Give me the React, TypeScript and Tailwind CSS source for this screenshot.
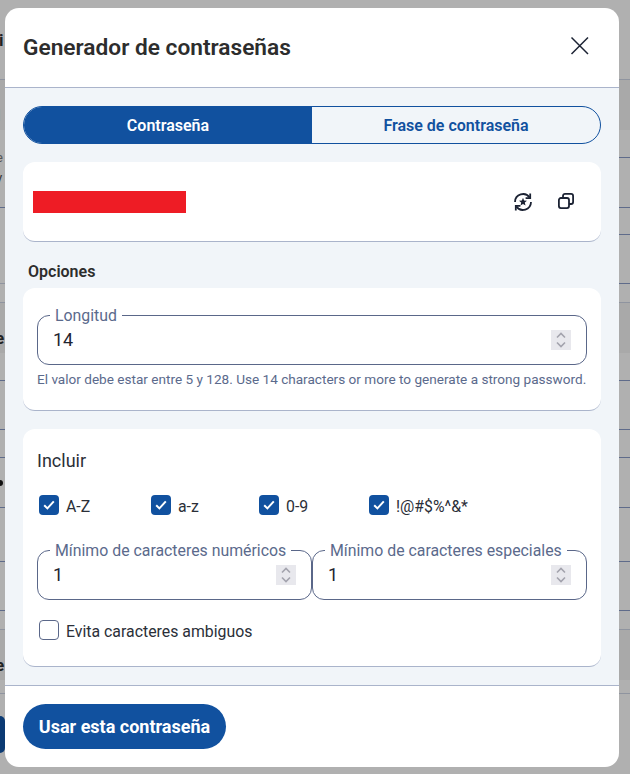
import React from "react";

const LINE = "border-b border-[#5f6b8a]";

// what is visible of the page behind the dialog, cut off at both sides
const BackdropLeft = () => (
  <div className="absolute left-0 top-0 h-full w-[5px] overflow-hidden font-['Roboto',sans-serif] font-bold text-[#222]">
    <div className="h-[80px] border-b border-[#8f949f] pt-[30px] text-[17px] leading-5">
      <span className="-ml-[1px] block">i</span>
    </div>
    <div className="h-[50px] bg-[#a9a9a9] pt-[25px] text-[17px] leading-5">
      <span className="-ml-[4px] block">l</span>
    </div>
    <div className={`h-[78px] pt-[18px] text-[13px] font-normal leading-5 text-[#555] ${LINE}`}>
      <span className="-ml-[4px] block">e</span>
      <span className="-ml-[4px] block text-[#333]">y</span>
    </div>
    <div className="h-[76px] border-b border-[#8f949f]" />
    <div className="h-[19px] border-b border-[#8f949f]" />
    <div className="h-[50px] bg-[#a9a9a9] pt-[25px] text-[17px] leading-5">
      <span className="-ml-[5px] block">e</span>
    </div>
    <div className={`h-[28px] ${LINE}`} />
    <div className={`h-[49px] ${LINE}`} />
    <div className={`h-[28px] ${LINE}`} />
    <div className={`h-[50px] pt-[22px] ${LINE}`}>
      <div className="h-[6px] w-[3px] rounded-r-full bg-[#111]" />
    </div>
    <div className={`h-[54px] ${LINE}`} />
    <div className={`h-[49px] ${LINE}`} />
    <div className="h-[19px] border-b border-[#8f949f]" />
    <div className="h-[50px] bg-[#a9a9a9] pt-[25px] text-[17px] leading-5">
      <span className="-ml-[5px] block">e</span>
    </div>
    <div className="h-[14px] border-b border-[#8f949f]" />
    <div className="mt-[22px] h-[37px] rounded-r-[8px] bg-[#0b3a73]" />
  </div>
);

const BackdropRight = () => (
  <div className="absolute right-0 top-0 h-full w-[11px] overflow-hidden">
    <div className="h-[80px] border-b border-[#8f949f]" />
    <div className="h-[50px] bg-[#a9a9a9]" />
    <div className={`h-[28px] ${LINE}`} />
    <div className={`h-[50px] ${LINE}`} />
    <div className={`h-[27px] ${LINE}`} />
    <div className={`h-[49px] ${LINE}`} />
    <div className="h-[19px] border-b border-[#8f949f]" />
    <div className="h-[50px] bg-[#a9a9a9]" />
    <div className={`h-[28px] ${LINE}`} />
    <div className={`h-[49px] ${LINE}`} />
    <div className={`h-[28px] ${LINE}`} />
    <div className={`h-[50px] ${LINE}`} />
    <div className={`h-[54px] ${LINE}`} />
    <div className={`h-[49px] ${LINE}`} />
    <div className="h-[19px] border-b border-[#8f949f]" />
    <div className="h-[50px] bg-[#a9a9a9]" />
    <div className="h-[14px] border-b border-[#8f949f]" />
  </div>
);

const Spinner = () => (
  <div className="flex h-5 w-5 flex-col items-center justify-center bg-[#e8e8ed]">
    <svg width="12" height="18" viewBox="0 0 12 18" fill="none" stroke="#a3a3ad" strokeWidth="1.6">
      <path d="M2 6.5 6 2.5 10 6.5" />
      <path d="M2 11.5 6 15.5 10 11.5" />
    </svg>
  </div>
);

const NumberField = ({ label, value }: { label: string; value: string }) => (
  <fieldset className="h-[60px] rounded-[12px] border border-[#5a6789] px-[12px]">
    <legend className="h-5 px-[5px] text-[15.85px] leading-[22px] text-[#5b6a8c]">{label}</legend>
    <div className="flex h-[30px] items-center justify-between px-[3px] text-[18px] text-[#1f2430]">
      <span className="leading-[26px]">{value}</span>
      <Spinner />
    </div>
  </fieldset>
);

const Check = ({ label, checked = true, className = "" }: { label: string; checked?: boolean; className?: string }) => (
  <label className={`flex h-6 items-start gap-[7px] text-[15.85px] leading-[27px] text-[#2b2f38] ${className}`}>
    {checked ? (
      <span className="mt-[2px] flex h-5 w-5 items-center justify-center rounded-[4px] bg-[#11519f]">
        <svg width="12" height="10" viewBox="0 0 12 10" fill="none" stroke="#fff" strokeWidth="2">
          <path d="M1.2 5.2 4.4 8.4 10.8 1.4" />
        </svg>
      </span>
    ) : (
      <span className="mt-[2px] h-5 w-5 rounded-[4px] border border-[#5a6789] bg-white" />
    )}
    {label}
  </label>
);

const App = () => (
  <div className="relative h-[774px] w-[630px] overflow-hidden bg-[#b0b0b0] pb-[7px] pl-[5px] pr-[11px] pt-[8px] font-['Roboto',sans-serif]">
    <BackdropLeft />
    <BackdropRight />
    <div className="relative flex h-full flex-col overflow-hidden rounded-[14px] bg-white">
      <header className="flex h-[80px] items-center justify-between border-b border-[#aab4cb] pl-[18px] pr-[29px]">
        <h1 className="pt-[2px] text-[22.7px] font-semibold text-[#2d2d2d]">Generador de contraseñas</h1>
        <svg className="mb-[3px]" width="20" height="20" viewBox="0 0 20 20" fill="none" stroke="#1b2233" strokeWidth="1.5">
          <path d="M1.5 1.5 18 18M18 1.5 1.5 18" />
        </svg>
      </header>

      <main className="flex flex-1 flex-col bg-[#f1f5f9] px-[18px] pt-[18px]">
        <div className="flex h-[38px] overflow-hidden rounded-full border border-[#11519f] text-[16px] font-semibold">
          <div className="flex w-[288px] items-center justify-center bg-[#11519f] pt-[2px] text-white">Contraseña</div>
          <div className="flex flex-1 items-center justify-center pt-[2px] text-[#11519f]">Frase de contraseña</div>
        </div>

        <section className="mt-[18px] flex h-[80px] items-center justify-between rounded-[12px] border-b border-[#aab4cb] bg-white pl-[10px] pr-[27px]">
          <div className="h-[22px] w-[153px] bg-[#ee1c25]" />
          <div className="flex items-center gap-[25px]">
            <svg width="20" height="20" viewBox="0 0 20 20" fill="none" stroke="#1b2233" strokeWidth="1.8">
              <path d="M2 10A8 8 0 0 1 16.6 5.6" />
              <path d="M18 10A8 8 0 0 1 3.4 14.4" />
              <path d="M17.2 1.6V6.2H12.6" />
              <path d="M2.8 18.4V13.8H7.4" />
              <path d="M10 5.8 11.1 8.5 14 8.7 11.8 10.6 12.5 13.4 10 11.9 7.5 13.4 8.2 10.6 6 8.7 8.9 8.5z" fill="#1b2233" stroke="none" />
            </svg>
            <svg className="mb-[1px]" width="16" height="16" viewBox="0 0 16 16" fill="none" stroke="#1b2233" strokeWidth="1.8">
              <rect x="0.9" y="5" width="10.1" height="10.1" rx="2" />
              <path d="M5 5V2.9a2 2 0 0 1 2-2h6.1a2 2 0 0 1 2 2V9a2 2 0 0 1-2 2H11" />
            </svg>
          </div>
        </section>

        <h2 className="mb-[7px] ml-[5px] mt-[21px] text-[16px] font-semibold leading-[18px] text-[#2d2d2d]">Opciones</h2>

        <section className="h-[123px] rounded-[12px] border-b border-[#aab4cb] bg-white px-[14px] pt-[17px]">
          <NumberField label="Longitud" value="14" />
          <p className="mt-[6px] whitespace-nowrap text-[13.58px] leading-[16px] text-[#5b6a8c]">
            El valor debe estar entre 5 y 128. Use 14 characters or more to generate a strong password.
          </p>
        </section>

        <section className="mt-[18px] h-[238px] rounded-[12px] border-b border-[#aab4cb] bg-white px-[14px] pt-[20px]">
          <h3 className="text-[18px] leading-[24px] text-[#2b2f38]">Incluir</h3>
          <div className="mt-[20px] flex pl-[2px]">
            <Check label="A-Z" className="w-[112px]" />
            <Check label="a-z" className="w-[108px]" />
            <Check label="0-9" className="w-[110px]" />
            <Check label="!@#$%^&*" />
          </div>
          <div className="mt-[23px] grid grid-cols-2">
            <NumberField label="Mínimo de caracteres numéricos" value="1" />
            <NumberField label="Mínimo de caracteres especiales" value="1" />
          </div>
          <Check label="Evita caracteres ambiguos" checked={false} className="ml-[2px] mt-[18px]" />
        </section>
      </main>

      <footer className="flex h-[82px] items-start border-t border-[#aab4cb] pl-[18px] pt-[18px]">
        <button className="h-[45px] w-[203px] rounded-full bg-[#11519f] text-[18px] font-bold text-white">
          Usar esta contraseña
        </button>
      </footer>
    </div>
  </div>
);

export default App;
